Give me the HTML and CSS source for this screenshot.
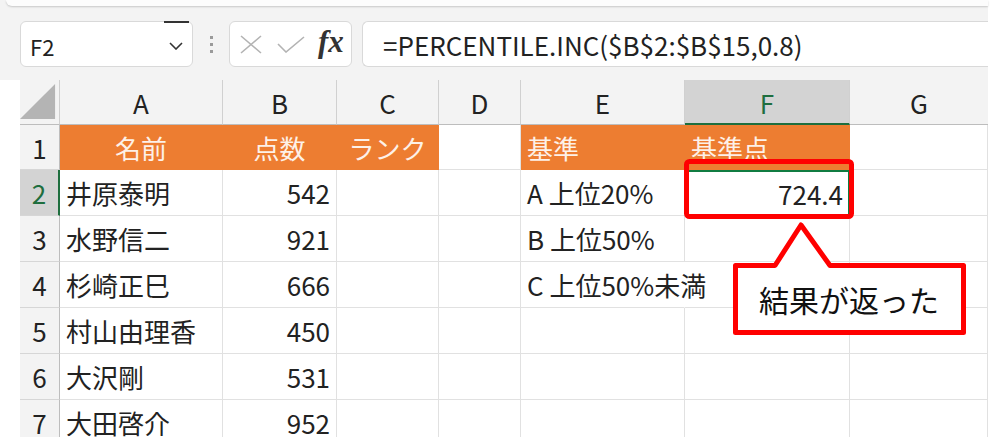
FILE: index.html
```html
<!DOCTYPE html>
<html lang="ja">
<head>
<meta charset="utf-8">
<link rel="stylesheet" href="styles.css">
</head>
<body>
<div class="app">
  <div class="toolbar">
    <div class="ribbon-edge"></div>
    <div class="fbar">
      <div class="namebox">
        <span class="name">F2</span>
        <span class="cursor"></span>
        <svg class="chev" width="14" height="8" viewBox="0 0 14 8"><path d="M1 1 L7 7 L13 1" fill="none" stroke="#333" stroke-width="1.6"/></svg>
      </div>
      <div class="grip"><i></i><i></i><i></i></div>
      <div class="fxbox">
        <svg width="22" height="19" viewBox="0 0 22 19"><path d="M1 1 L21 18 M21 1 L1 18" fill="none" stroke="#b3b3b3" stroke-width="1.6"/></svg>
        <svg width="28" height="17" viewBox="0 0 28 17"><path d="M1 8 L9 16 L27 1" fill="none" stroke="#b3b3b3" stroke-width="1.6"/></svg>
        <span class="fx">fx</span>
      </div>
      <div class="formula">=PERCENTILE.INC($B$2:$B$15,0.8)</div>
    </div>
  </div>
  <div class="sheet">
    <div class="grid">
      <div class="corner"><svg width="38" height="37" viewBox="0 0 38 37"><path d="M0 37 L37 37 L37 0 Z" fill="#b4b4b4"/></svg></div>
      <div class="ch">A</div>
      <div class="ch">B</div>
      <div class="ch">C</div>
      <div class="ch">D</div>
      <div class="ch">E</div>
      <div class="ch sel">F</div>
      <div class="ch last">G</div>

      <div class="rh">1</div>
      <div class="c hd center">名前</div>
      <div class="c hd center">点数</div>
      <div class="c hd center">ランク</div>
      <div class="c"></div>
      <div class="c hd">基準</div>
      <div class="c hd">基準点</div>
      <div class="c"></div>

      <div class="rh sel">2</div>
      <div class="c">井原泰明</div>
      <div class="c num">542</div>
      <div class="c"></div>
      <div class="c"></div>
      <div class="c">A 上位20%</div>
      <div class="c num active">724.4</div>
      <div class="c"></div>

      <div class="rh">3</div>
      <div class="c">水野信二</div>
      <div class="c num">921</div>
      <div class="c"></div>
      <div class="c"></div>
      <div class="c">B 上位50%</div>
      <div class="c"></div>
      <div class="c"></div>

      <div class="rh">4</div>
      <div class="c">杉崎正巳</div>
      <div class="c num">666</div>
      <div class="c"></div>
      <div class="c"></div>
      <div class="c overflow">C 上位50%未満</div>
      <div class="c"></div>
      <div class="c"></div>

      <div class="rh">5</div>
      <div class="c">村山由理香</div>
      <div class="c num">450</div>
      <div class="c"></div>
      <div class="c"></div>
      <div class="c"></div>
      <div class="c"></div>
      <div class="c"></div>

      <div class="rh">6</div>
      <div class="c">大沢剛</div>
      <div class="c num">531</div>
      <div class="c"></div>
      <div class="c"></div>
      <div class="c"></div>
      <div class="c"></div>
      <div class="c"></div>

      <div class="rh">7</div>
      <div class="c">大田啓介</div>
      <div class="c num">952</div>
      <div class="c"></div>
      <div class="c"></div>
      <div class="c"></div>
      <div class="c"></div>
      <div class="c"></div>
    </div>
  </div>
  <svg class="callout" width="1002" height="444" viewBox="0 0 1002 444">
    <rect x="686.5" y="161.5" width="165" height="55" rx="3" fill="none" stroke="#ff0000" stroke-width="5"/>
    <path d="M735.5 265.5 L775 265.5 L801 225 L830 265.5 L963.5 265.5 L963.5 332.5 L735.5 332.5 Z" fill="#fff" stroke="#ff0000" stroke-width="5" stroke-linejoin="round"/>
    <text x="849" y="312" text-anchor="middle" class="callout-text">結果が返った</text>
  </svg>
</div>
</body>
</html>
```
FILE: styles.css
```css
* { box-sizing: border-box; }
html, body { margin: 0; padding: 0; background: #fff; }
body { font-family: "Noto Sans CJK JP", "Noto Sans", sans-serif; color: #222; }

.app { position: relative; width: 1002px; height: 444px; overflow: hidden; }

.toolbar {
  width: 988px;
  height: 80px;
  background: #f3f3f3;
  padding: 0 0 0 20px;
  position: relative;
}
.ribbon-edge {
  position: absolute;
  left: 6px; right: 0; top: 0;
  height: 6px;
  background: #fcfcfc;
  border-bottom-left-radius: 6px;
  box-shadow: 0 1px 2px rgba(0,0,0,0.18);
}
.fbar {
  display: flex;
  align-items: stretch;
  padding-top: 21px;
  height: 67px;
}
.namebox {
  width: 173px;
  background: #fff;
  border: 1px solid #d9d9d9;
  border-radius: 6px;
  display: flex;
  align-items: center;
  padding: 0 9px 0 9px;
  position: relative;
}
.name { font-size: 22px; color: #222; flex: 1; padding-top: 3px; }
.cursor { position: absolute; left: 143px; top: -1px; width: 25px; height: 2px; background: #333; }
.chev { margin-top: 4px; }
.grip {
  width: 36px;
  display: flex;
  flex-direction: column;
  align-items: center;
  justify-content: center;
  gap: 4px;
}
.grip i { display: block; width: 3px; height: 3px; background: #9a9a9a; }
.fxbox {
  width: 123px;
  background: #fff;
  border: 1px solid #d9d9d9;
  border-radius: 6px;
  display: flex;
  align-items: center;
  padding: 0 0 0 10px;
  gap: 15px;
}
.fx {
  font-family: "Liberation Serif", serif;
  font-style: italic;
  font-weight: bold;
  font-size: 31px;
  color: #333;
  margin-left: -2px;
  margin-top: -4px;
}
.formula {
  margin-left: 10px;
  flex: 1;
  background: #fff;
  border: 1px solid #d9d9d9;
  border-right: none;
  border-radius: 6px 0 0 6px;
  font-size: 26px;
  color: #222;
  display: flex;
  align-items: center;
  padding-left: 20px;
  padding-top: 1px;
}

.sheet {
  margin-left: 20px;
  width: 968px;
  height: 357px;
  overflow: hidden;
}
.grid {
  display: grid;
  grid-template-columns: 40px 163px 114px 102px 82px 164px 165px 138px;
  grid-template-rows: 45px 45px repeat(6, 46px);
  font-size: 26px;
}
.corner {
  background: #f3f3f3;
  border-right: 1px solid #cfcfcf;
  border-bottom: 1px solid #bdbdbd;
  display: flex;
  align-items: flex-end;
  justify-content: flex-end;
  padding: 0 3px 4px 0;
}
.ch {
  background: #f3f3f3;
  border-right: 1px solid #d0d0d0;
  border-bottom: 1px solid #bdbdbd;
  display: flex;
  align-items: center;
  justify-content: center;
  color: #222;
  padding-top: 1px;
}
.ch.last { border-right: none; }
.ch.sel {
  background: #d3d3d3;
  color: #1e6e3e;
  border-bottom: 2px solid #1e6e3e;
}
.rh {
  background: #f3f3f3;
  border-right: 1px solid #bdbdbd;
  border-bottom: 1px solid #d6d6d6;
  display: flex;
  align-items: center;
  justify-content: center;
  color: #222;
}
.rh.sel {
  background: #d3d3d3;
  color: #1e6e3e;
  border-right: 2px solid #1e6e3e;
}
.c {
  border-right: 1px solid #e1e1e1;
  border-bottom: 1px solid #e1e1e1;
  display: flex;
  align-items: center;
  padding: 0 6px;
  white-space: nowrap;
  color: #222;
  background: #fff;
}
.c.hd {
  background: #ed7d31;
  border-color: #ed7d31;
  color: #fdf1e8;
}
.c.center { justify-content: center; padding: 0; }
.c.num { justify-content: flex-end; }
.c.active { border: 2px solid #107c41; padding-right: 5px; }
.c.overflow { border-right-color: transparent; overflow: visible; position: relative; z-index: 1; background: transparent; }

.callout { position: absolute; left: 0; top: 0; pointer-events: none; }
.callout-text {
  font-family: "Noto Sans CJK JP", sans-serif;
  font-size: 30px;
  font-weight: 400;
  fill: #111;
}
```
